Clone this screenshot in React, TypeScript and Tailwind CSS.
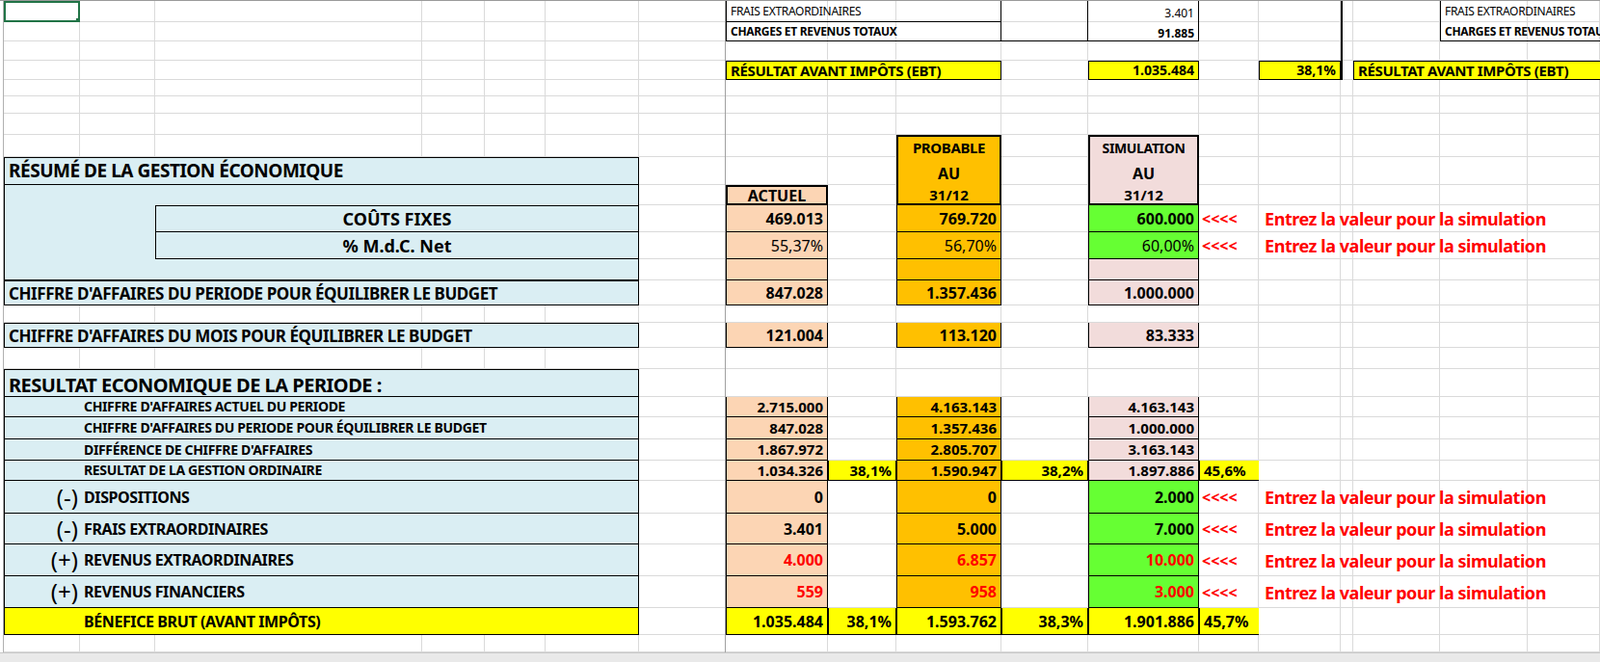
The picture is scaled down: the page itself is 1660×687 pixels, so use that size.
import React from "react"
import { clsx } from "clsx"

const Cell = ({
  c,
  r,
  cs = 1,
  rs = 1,
  className,
  children,
}: {
  c: number
  r: number
  cs?: number
  rs?: number
  className?: string
  children?: React.ReactNode
}) => (
  <div
    style={{ gridColumn: `${c} / span ${cs}`, gridRow: `${r} / span ${rs}` }}
    className={clsx("flex items-center overflow-hidden whitespace-nowrap leading-none", className)}
  >
    {children}
  </div>
)

const ROWS = 28
const COLS = 19

// columns: H=9 actuel, J=11 probable, L=13 simulation
const valueRows: {
  r: number
  h: string
  j: string
  l: string
  pct?: [string, string, string]
  input?: boolean
  red?: boolean
  yellow?: boolean
  regular?: boolean
  small?: boolean
}[] = [
  { r: 11, h: "469.013", j: "769.720", l: "600.000", input: true },
  { r: 12, h: "55,37%", j: "56,70%", l: "60,00%", input: true, regular: true },
  { r: 13, h: "", j: "", l: "" },
  { r: 14, h: "847.028", j: "1.357.436", l: "1.000.000" },
  { r: 16, h: "121.004", j: "113.120", l: "83.333" },
  { r: 19, h: "2.715.000", j: "4.163.143", l: "4.163.143", small: true },
  { r: 20, h: "847.028", j: "1.357.436", l: "1.000.000", small: true },
  { r: 21, h: "1.867.972", j: "2.805.707", l: "3.163.143", small: true },
  { r: 22, h: "1.034.326", j: "1.590.947", l: "1.897.886", small: true, pct: ["38,1%", "38,2%", "45,6%"] },
  { r: 23, h: "0", j: "0", l: "2.000", input: true },
  { r: 24, h: "3.401", j: "5.000", l: "7.000", input: true },
  { r: 25, h: "4.000", j: "6.857", l: "10.000", input: true, red: true },
  { r: 26, h: "559", j: "958", l: "3.000", input: true, red: true },
  { r: 27, h: "1.035.484", j: "1.593.762", l: "1.901.886", yellow: true, pct: ["38,1%", "38,3%", "45,7%"] },
]

const blueRows: { r: number; sign?: string; label: string; big?: boolean }[] = [
  { r: 19, label: "CHIFFRE D'AFFAIRES ACTUEL DU PERIODE" },
  { r: 20, label: "CHIFFRE D'AFFAIRES DU PERIODE POUR ÉQUILIBRER LE BUDGET" },
  { r: 21, label: "DIFFÉRENCE DE CHIFFRE D'AFFAIRES" },
  { r: 22, label: "RESULTAT DE LA GESTION ORDINAIRE" },
  { r: 23, sign: "(-)", label: "DISPOSITIONS", big: true },
  { r: 24, sign: "(-)", label: "FRAIS EXTRAORDINAIRES", big: true },
  { r: 25, sign: "(+)", label: "REVENUS EXTRAORDINAIRES", big: true },
  { r: 26, sign: "(+)", label: "REVENUS FINANCIERS", big: true },
]

export default function App() {
  const base: React.ReactNode[] = []
  for (let r = 1; r <= ROWS; r++) {
    for (let c = 2; c <= COLS; c++) {
      base.push(<Cell key={`g${r}-${c}`} c={c} r={r} className="border-r border-b border-[#dadada]" />)
    }
  }

  return (
    <div className="h-[687px] w-[1660px] overflow-hidden bg-white [font-family:'Liberation_Sans',Arial,sans-serif] text-black">
      <div className="grid grid-cols-[4px_79px_78px_277px_65px_63px_97px_90px_106px_71px_109px_90px_115px_62px_85px_13px_90px_91px_75px] grid-rows-[22px_20px_20px_20px_17px_18px_22px_23px_29px_21px_28px_28px_22px_26px_18px_26px_22px_29px_21px_23px_22px_21px_34px_32px_33px_33px_28px_18px] border-t border-[#9a9a9a]">
        {base}
        <Cell c={1} r={1} rs={ROWS} className="border-r border-[#b0b0b0]" />
        <Cell c={8} r={1} rs={ROWS} className="border-r border-[#a0a0a0]" />
        {/* selected cell */}
        <Cell c={2} r={1} className="relative border-2 border-[#217346]">
          <span className="absolute -bottom-[3px] -right-[3px] h-[5px] w-[5px] bg-[#217346]" />
        </Cell>

        {/* top summary block */}
        <Cell c={9} r={1} cs={3} className="border-l border-r border-b border-black pl-1 text-[12px] tracking-tight">FRAIS EXTRAORDINAIRES</Cell>
        <Cell c={12} r={1} className="border-r border-black" />
        <Cell c={13} r={1} className="justify-end border-r border-black pr-1 pt-1 text-[12px]">3.401</Cell>
        <Cell c={9} r={2} cs={3} className="border-l border-r border-b border-black pl-1 text-[12px] font-bold tracking-tight">CHARGES ET REVENUS TOTAUX</Cell>
        <Cell c={12} r={2} className="border-r border-b border-black" />
        <Cell c={13} r={2} className="justify-end border-r border-b border-black pr-1 pt-1 text-[12px] font-bold">91.885</Cell>
        <Cell c={9} r={4} cs={3} className="border border-black bg-[#ffff00] pl-1 text-[15px] font-bold tracking-tight">RÉSULTAT AVANT IMPÔTS (EBT)</Cell>
        <Cell c={13} r={4} className="justify-end border border-black bg-[#ffff00] pr-1 text-[14px] font-bold">1.035.484</Cell>
        <Cell c={15} r={4} className="justify-end border border-black bg-[#ffff00] pr-1 text-[14px] font-bold">38,1%</Cell>
        <Cell c={16} r={1} rs={4} className="border-l-2 border-black" />
        <Cell c={18} r={1} cs={2} className="border-l border-black pl-1 text-[12px] tracking-tight">FRAIS EXTRAORDINAIRES</Cell>
        <Cell c={18} r={2} cs={2} className="border-l border-b border-black pl-1 text-[12px] font-bold tracking-tight">CHARGES ET REVENUS TOTAUX</Cell>
        <Cell c={17} r={4} cs={3} className="border-l border-y border-black bg-[#ffff00] pl-1 text-[15px] font-bold tracking-tight">RÉSULTAT AVANT IMPÔTS (EBT)</Cell>

        {/* column headers */}
        <Cell c={11} r={8} rs={3} className="flex-col !items-stretch border-2 border-black bg-[#ffc000] text-[15px] font-bold">
          <div className="flex h-[23px] items-center justify-center tracking-tight">PROBABLE</div>
          <div className="flex h-[29px] items-center justify-center text-[16px]">AU</div>
          <div className="flex flex-1 items-center justify-center">31/12</div>
        </Cell>
        <Cell c={13} r={8} rs={3} className="flex-col !items-stretch border-2 border-black bg-[#f2dcdb] text-[15px] font-bold">
          <div className="flex h-[23px] items-center justify-center text-[14px] tracking-tight">SIMULATION</div>
          <div className="flex h-[29px] items-center justify-center text-[16px]">AU</div>
          <div className="flex flex-1 items-center justify-center">31/12</div>
        </Cell>
        <Cell c={9} r={10} className="justify-center border-2 border-black bg-[#fcd5b4] text-[16px] font-bold">ACTUEL</Cell>

        {/* left summary */}
        <Cell c={2} r={9} cs={6} className="border border-black bg-[#daeef3] pl-1 text-[19px] font-bold tracking-tight">RÉSUMÉ DE LA GESTION ÉCONOMIQUE</Cell>
        <Cell c={2} r={10} cs={6} rs={4} className="border-l border-r border-b border-black bg-[#daeef3]" />
        <Cell c={4} r={11} cs={4} className="justify-center border border-black bg-[#daeef3] text-[18px] font-bold">COÛTS FIXES</Cell>
        <Cell c={4} r={12} cs={4} className="justify-center border-x border-b border-black bg-[#daeef3] text-[18px] font-bold">% M.d.C. Net</Cell>
        <Cell c={2} r={14} cs={6} className="border border-black bg-[#daeef3] pl-1 text-[17px] font-bold tracking-tight">CHIFFRE D'AFFAIRES DU PERIODE POUR ÉQUILIBRER LE BUDGET</Cell>
        <Cell c={2} r={16} cs={6} className="border border-black bg-[#daeef3] pl-1 text-[17px] font-bold tracking-tight">CHIFFRE D'AFFAIRES DU MOIS POUR ÉQUILIBRER LE BUDGET</Cell>
        <Cell c={2} r={18} cs={6} className="border border-black bg-[#daeef3] pl-1 pt-1 text-[20px] font-bold tracking-tight">RESULTAT ECONOMIQUE DE LA PERIODE :</Cell>
        {blueRows.map((b) => (
          <Cell key={b.r} c={2} r={b.r} cs={6} className="border-x border-b border-black bg-[#daeef3]">
            <div className="flex w-[79px] justify-end pr-[3px] text-[24px] font-normal">{b.sign}</div>
            <div className={clsx("pl-[3px] font-bold tracking-tight", b.big ? "text-[16px]" : "text-[14px]")}>{b.label}</div>
          </Cell>
        ))}
        <Cell c={2} r={27} cs={6} className="border-x border-b border-black bg-[#ffff00]">
          <div className="w-[79px]" />
          <div className="pl-[3px] text-[16px] font-bold tracking-tight">BÉNEFICE BRUT (AVANT IMPÔTS)</div>
        </Cell>

        {/* values */}
        {valueRows.map((v) => {
          const txt = clsx(
            "justify-end border-x border-b border-black pr-1",
            v.small ? "text-[15px]" : "text-[16px]",
            v.regular ? "font-normal" : "font-bold",
            v.red && "text-[#ff0000]"
          )
          return (
            <React.Fragment key={v.r}>
              <Cell c={9} r={v.r} className={clsx(txt, v.yellow ? "bg-[#ffff00]" : "bg-[#fcd5b4]")}>{v.h}</Cell>
              <Cell c={11} r={v.r} className={clsx(txt, v.yellow ? "bg-[#ffff00]" : "bg-[#ffc000]")}>{v.j}</Cell>
              <Cell c={13} r={v.r} className={clsx(txt, v.yellow ? "bg-[#ffff00]" : v.input ? "bg-[#66ff33]" : "bg-[#f2dcdb]")}>{v.l}</Cell>
              {v.pct &&
                [10, 12, 14].map((c, i) => (
                  <Cell key={c} c={c} r={v.r} className={clsx("justify-end border-x border-b border-black bg-[#ffff00] pr-1 font-bold", v.small ? "text-[15px]" : "text-[16px]", i === 2 && "!justify-start pl-1 !border-r-0")}>
                    {v.pct![i]}
                  </Cell>
                ))}
              {v.input && (
                <>
                  <Cell c={14} r={v.r} className="pl-[3px] text-[16px] font-bold text-[#ff0000]">&lt;&lt;&lt;&lt;</Cell>
                  <Cell c={15} r={v.r} cs={5} className="pl-[6px] text-[18px] font-bold tracking-tight text-[#ff0000]">Entrez la valeur pour la simulation</Cell>
                </>
              )}
            </React.Fragment>
          )
        })}
      </div>
      <div className="h-[11px] border-t border-[#c8c8c8] bg-[#e9e9e9]" />
    </div>
  )
}
